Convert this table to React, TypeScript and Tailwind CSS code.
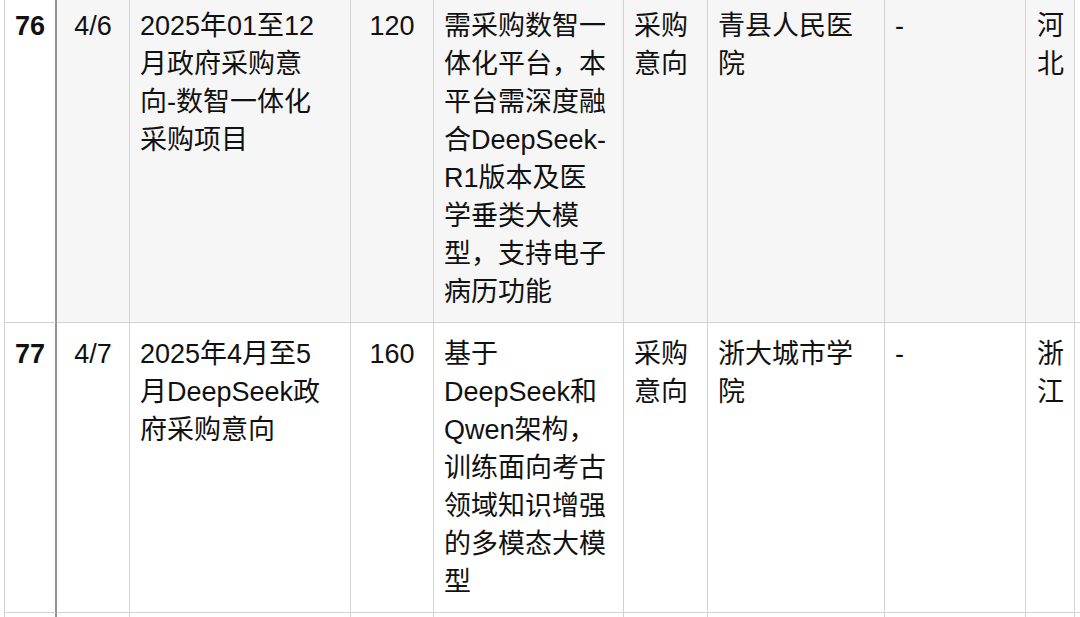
import React from "react";

type Row = {
  no: string;
  date: string;
  title: string[];
  amount: string;
  desc: string[];
  kind: string[];
  buyer: string[];
  extra: string;
  region: string[];
  bg: string;
};

const rows: Row[] = [
  {
    no: "76",
    date: "4/6",
    title: ["2025年01至12", "月政府采购意", "向-数智一体化", "采购项目"],
    amount: "120",
    desc: [
      "需采购数智一",
      "体化平台，本",
      "平台需深度融",
      "合DeepSeek-",
      "R1版本及医",
      "学垂类大模",
      "型，支持电子",
      "病历功能",
    ],
    kind: ["采购", "意向"],
    buyer: ["青县人民医", "院"],
    extra: "-",
    region: ["河", "北"],
    bg: "bg-[#f6f6f6]",
  },
  {
    no: "77",
    date: "4/7",
    title: ["2025年4月至5", "月DeepSeek政", "府采购意向"],
    amount: "160",
    desc: [
      "基于",
      "DeepSeek和",
      "Qwen架构，",
      "训练面向考古",
      "领域知识增强",
      "的多模态大模",
      "型",
    ],
    kind: ["采购", "意向"],
    buyer: ["浙大城市学", "院"],
    extra: "-",
    region: ["浙", "江"],
    bg: "bg-white",
  },
];

function Lines({ lines }: { lines: string[] }) {
  return (
    <>
      {lines.map((l, i) => (
        <span key={i} className="block whitespace-nowrap">
          {l}
        </span>
      ))}
    </>
  );
}

const cell =
  "border-r border-b border-[#d2d2d2] px-[10px] pt-[12px] pb-[11px]";

export default function App() {
  return (
    <div className="w-[1080px] h-[617px] overflow-hidden bg-white text-[#111] [font-family:'Liberation_Sans','Noto_Sans_CJK_SC',sans-serif] text-[27px] leading-[38px]">
      <div className="ml-[4px] -mt-[5px] grid grid-cols-[53px_73px_221px_83px_190px_84px_177px_141px_49px_100px]">
        {rows.map((r) => (
          <React.Fragment key={r.no}>
            <div
              className={`${cell} border-l border-r-2 border-r-[#929292] bg-white text-center font-bold`}
            >
              {r.no}
            </div>
            <div className={`${cell} ${r.bg} text-center`}>{r.date}</div>
            <div className={`${cell} ${r.bg}`}>
              <Lines lines={r.title} />
            </div>
            <div className={`${cell} ${r.bg} text-center`}>{r.amount}</div>
            <div className={`${cell} ${r.bg}`}>
              <Lines lines={r.desc} />
            </div>
            <div className={`${cell} ${r.bg}`}>
              <Lines lines={r.kind} />
            </div>
            <div className={`${cell} ${r.bg}`}>
              <Lines lines={r.buyer} />
            </div>
            <div className={`${cell} ${r.bg}`}>{r.extra}</div>
            <div className={`${cell} ${r.bg} pl-[11px] pr-0`}>
              <Lines lines={r.region} />
            </div>
            <div className={`${cell} bg-white`}></div>
          </React.Fragment>
        ))}
        <div className={`${cell} border-l border-r-2 border-r-[#929292] h-[80px] bg-white`}></div>
        <div className={`${cell} h-[80px]`}></div>
        <div className={`${cell} h-[80px]`}></div>
        <div className={`${cell} h-[80px]`}></div>
        <div className={`${cell} h-[80px]`}></div>
        <div className={`${cell} h-[80px]`}></div>
        <div className={`${cell} h-[80px]`}></div>
        <div className={`${cell} h-[80px]`}></div>
        <div className={`${cell} h-[80px]`}></div>
        <div className={`${cell} h-[80px]`}></div>
      </div>
    </div>
  );
}
